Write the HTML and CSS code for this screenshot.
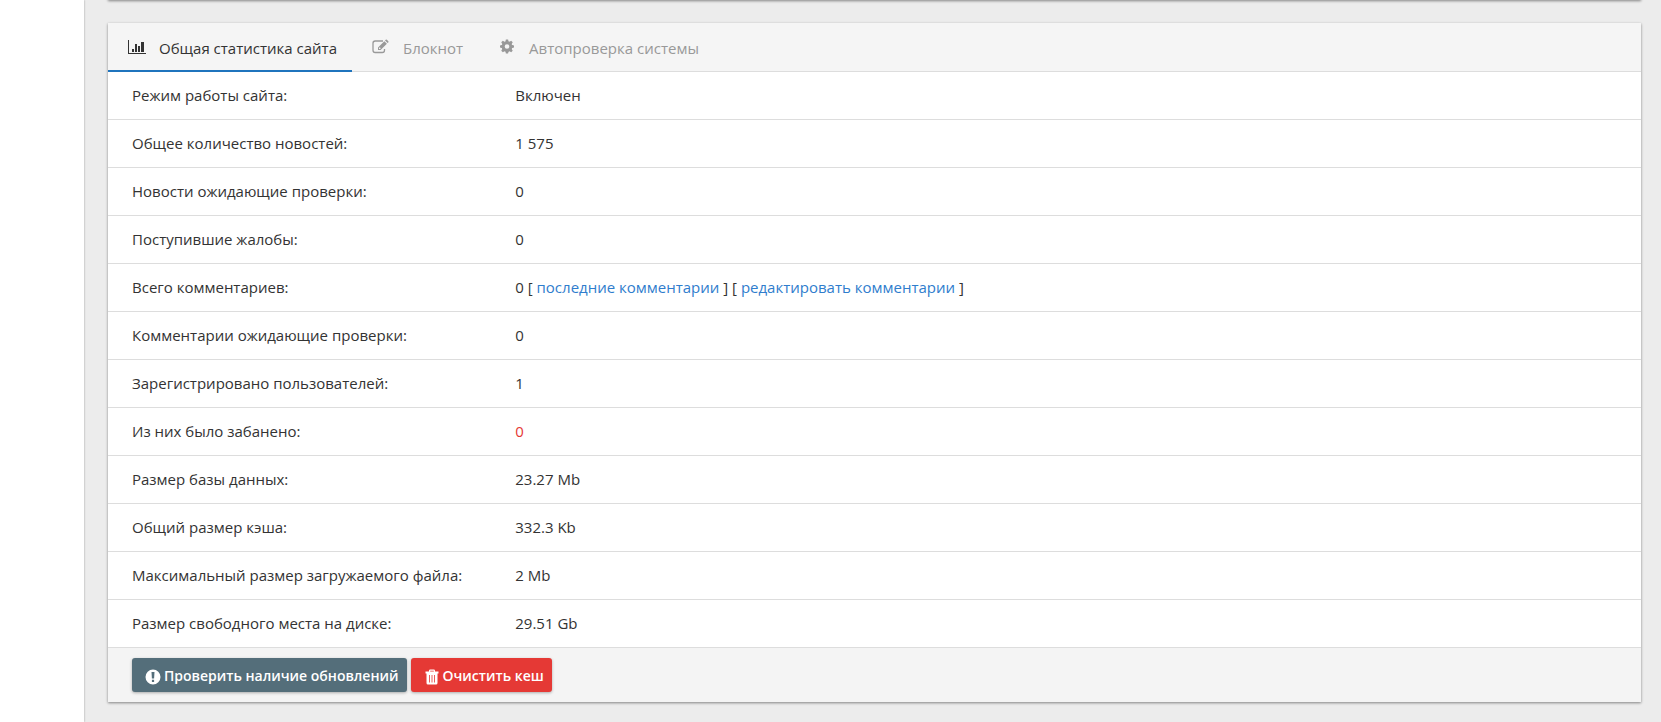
FILE: index.html
```html
<!DOCTYPE html>
<html lang="ru">
<head>
<meta charset="utf-8">
<title>Общая статистика сайта</title>
<link rel="stylesheet" href="styles.css">
</head>
<body>
<aside class="sidebar"></aside>
<main class="content">
  <div class="panel panel-previous"></div>
  <section class="panel">
    <nav class="tabs">
      <button class="tab tab-active" type="button">
        <svg viewBox="0 0 18 16" fill="currentColor"><path d="M0 1h1v13h17v1H0zM4 10h2v3H4zM7 5h2v8H7zM10 7h2v6h-2zM13 3h3v10h-3z"/></svg>
        <span>Общая статистика сайта</span>
      </button>
      <button class="tab" type="button">
        <svg viewBox="0 0 18 16"><path d="M11 2H3.200Q1 2 1 4.200v7.100q0 2.200 2.200 2.200h7.100q2.200 0 2.200-2.200V10" fill="none" stroke="currentColor" stroke-width="1.300"/><path fill="currentColor" fill-rule="evenodd" d="M6 8.500 12.300 2.200l2.600 2.600L8.600 11H6zM7 9v1h1l.8-.8-1-1zM13 1.500l.7-.7q.6-.5 1.200 0l1.400 1.400q.5.600 0 1.200l-.7.700z"/></svg>
        <span>Блокнот</span>
      </button>
      <button class="tab" type="button">
        <svg viewBox="0 0 14 16"><g fill="currentColor"><path fill-rule="evenodd" d="M7 2.200a5.300 5.300 0 1 0 0 10.600 5.300 5.300 0 0 0 0-10.600zm0 3a2.300 2.300 0 1 1 0 4.600 2.300 2.300 0 0 1 0-4.600z"/><path id="tooth" d="M5.300 3 5.900.5h2.200L8.700 3z"/><use href="#tooth" transform="rotate(45 7 7.500)"/><use href="#tooth" transform="rotate(90 7 7.500)"/><use href="#tooth" transform="rotate(135 7 7.500)"/><use href="#tooth" transform="rotate(180 7 7.500)"/><use href="#tooth" transform="rotate(225 7 7.500)"/><use href="#tooth" transform="rotate(270 7 7.500)"/><use href="#tooth" transform="rotate(315 7 7.500)"/></g></svg>
        <span>Автопроверка системы</span>
      </button>
    </nav>
    <table class="stats">
      <tbody>
        <tr><th scope="row">Режим работы сайта:</th><td>Включен</td></tr>
        <tr><th scope="row">Общее количество новостей:</th><td>1 575</td></tr>
        <tr><th scope="row">Новости ожидающие проверки:</th><td>0</td></tr>
        <tr><th scope="row">Поступившие жалобы:</th><td>0</td></tr>
        <tr><th scope="row">Всего комментариев:</th><td>0 [ <a href="#">последние комментарии</a> ] [ <a href="#">редактировать комментарии</a> ]</td></tr>
        <tr><th scope="row">Комментарии ожидающие проверки:</th><td>0</td></tr>
        <tr><th scope="row">Зарегистрировано пользователей:</th><td>1</td></tr>
        <tr><th scope="row">Из них было забанено:</th><td class="danger">0</td></tr>
        <tr><th scope="row">Размер базы данных:</th><td>23.27 Mb</td></tr>
        <tr><th scope="row">Общий размер кэша:</th><td>332.3 Kb</td></tr>
        <tr><th scope="row">Максимальный размер загружаемого файла:</th><td>2 Mb</td></tr>
        <tr><th scope="row">Размер свободного места на диске:</th><td>29.51 Gb</td></tr>
      </tbody>
    </table>
    <footer class="actions">
      <button class="btn btn-slate" type="button">
        <svg width="16" height="16" viewBox="0 0 16 16"><path fill="currentColor" fill-rule="evenodd" d="M8 .5a7.500 7.500 0 1 0 0 15 7.500 7.500 0 0 0 0-15zM6.500 3h3L9.100 9.500H6.900zM6.900 10.700h2.200v2.200H6.900z"/></svg>
        <span>Проверить наличие обновлений</span>
      </button>
      <button class="btn btn-red" type="button">
        <svg width="16" height="16" viewBox="0 0 16 16"><path fill="currentColor" fill-rule="evenodd" d="M1.500 2.500H5V1.700Q5 .5 6.200.5h3.600Q11 .5 11 1.700v.8h3.500v2h-13zM6.200 2.500h3.600v-.8H6.200zM2.500 4.500h11V14q0 1.500-1.500 1.500H4Q2.500 15.500 2.500 14zM5 6v7.500h.8V6zM7.600 6v7.500h.8V6zM10.200 6v7.500h.8V6z"/></svg>
        <span>Очистить кеш</span>
      </button>
    </footer>
  </section>
</main>
</body>
</html>
```
FILE: styles.css
```css
* {
  box-sizing: border-box;
}

body {
  margin: 0;
  min-height: 100vh;
  display: flex;
  overflow-x: hidden;
  background: #ececec;
  color: #333;
  font: 15px/20px "Open Sans", "Noto Sans", sans-serif;
}

.sidebar {
  width: 84px;
  flex: none;
  background: #fff;
  box-shadow: 0 0 2px rgba(0, 0, 0, 0.35);
}

.content {
  flex: 1;
  min-width: 0;
  padding: 0 20px 19px 24px;
}

.panel {
  background: #fff;
  box-shadow: 0 1px 3px rgba(0, 0, 0, 0.24), 0 1px 2px rgba(0, 0, 0, 0.24);
}

.panel-previous {
  height: 20px;
  margin: -20px 0 23px;
}

.tabs {
  display: flex;
  height: 49px;
  background: #f5f5f5;
  border-bottom: 1px solid #ddd;
}

.tab {
  display: flex;
  align-items: center;
  gap: 13px;
  height: 49px;
  padding: 2px 15px 0 20px;
  border: 0;
  border-bottom: 2px solid transparent;
  background: none;
  color: #999;
  font: inherit;
  white-space: nowrap;
}

.tab svg {
  width: 18px;
  height: 16px;
  margin-bottom: 2px;
}

.tab-active {
  color: #333;
  border-bottom-color: #1f74bd;
}

.stats {
  width: 100%;
  border-spacing: 0;
  table-layout: fixed;
}

.stats th,
.stats td {
  height: 48px;
  padding: 0 24px 2px;
  border-bottom: 1px solid #ddd;
  font-weight: 400;
  text-align: left;
}

.stats th {
  width: 25%;
  white-space: nowrap;
}

.stats a {
  color: #2f7dcd;
  text-decoration: none;
}

.stats .danger {
  color: #e53935;
}

.actions {
  display: flex;
  gap: 4px;
  padding: 10px 24px;
  background: #f4f4f4;
}

.btn {
  display: flex;
  align-items: center;
  gap: 3px;
  height: 34px;
  padding: 2px 8px 0 13px;
  border: 0;
  border-radius: 3px;
  color: #fff;
  font: 600 14px/20px "Open Sans", "Noto Sans", sans-serif;
  white-space: nowrap;
  box-shadow: 0 1px 3px rgba(0, 0, 0, 0.3);
}

.btn svg {
  margin-top: 2px;
}

.btn-slate {
  background: #546e7a;
}

.btn-red {
  background: #e53935;
}
```
